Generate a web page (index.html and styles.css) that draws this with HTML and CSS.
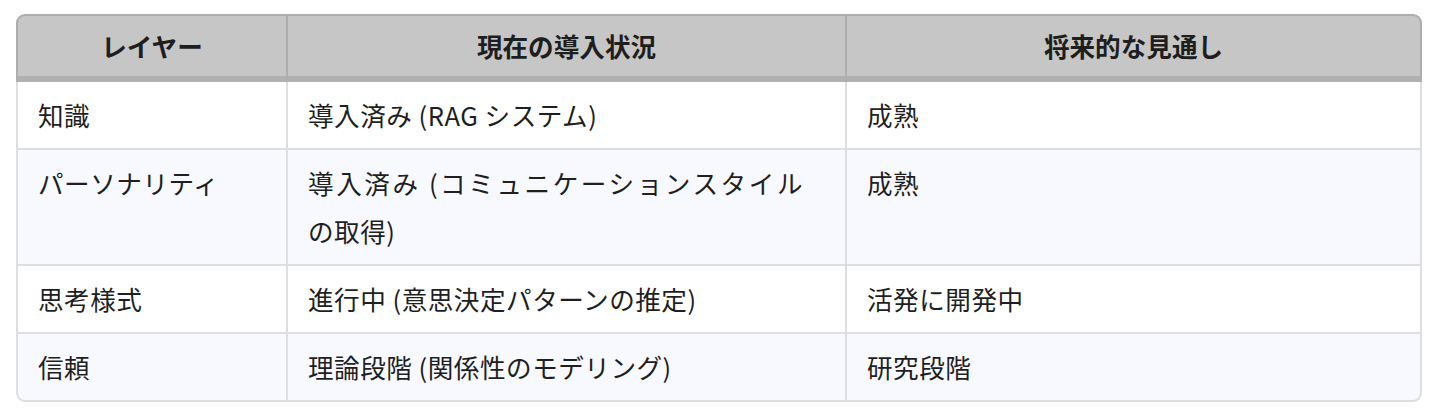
FILE: index.html
```html
<!DOCTYPE html>
<html lang="ja">
<head>
<meta charset="utf-8">
<title>レイヤー</title>
<link rel="stylesheet" href="styles.css">
</head>
<body>
<table class="grid">
  <colgroup>
    <col class="c1">
    <col class="c2">
    <col class="c3">
  </colgroup>
  <thead>
    <tr>
      <th>レイヤー</th>
      <th>現在の導入状況</th>
      <th>将来的な見通し</th>
    </tr>
  </thead>
  <tbody>
    <tr>
      <td>知識</td>
      <td>導入済み (RAG システム)</td>
      <td>成熟</td>
    </tr>
    <tr class="alt">
      <td>パーソナリティ</td>
      <td>導入済み (コミュニケーションスタイル<span class="keep">の取得)</span></td>
      <td>成熟</td>
    </tr>
    <tr>
      <td>思考様式</td>
      <td>進行中 (意思決定パターンの推定)</td>
      <td>活発に開発中</td>
    </tr>
    <tr class="alt">
      <td>信頼</td>
      <td>理論段階 (関係性のモデリング)</td>
      <td>研究段階</td>
    </tr>
  </tbody>
</table>
</body>
</html>
```

FILE: styles.css
```css
html, body {
  margin: 0;
  background: #ffffff;
}

body {
  padding: 14px 16px;
  font-family: "Noto Sans CJK JP", "Noto Sans", sans-serif;
  color: #1f1f1f;
}

.grid {
  width: 1406px;
  table-layout: fixed;
  border-collapse: separate;
  border-spacing: 0;
  font-size: 25.6px;
  line-height: 48px;
}

.c1 { width: 272px; }
.c2 { width: 559px; }
.c3 { width: 575px; }

.grid th {
  background: #c6c6c6;
  font-weight: 700;
  text-align: center;
  padding: 6px 20px;
  border-top: 2px solid #adadad;
  border-right: 2px solid #adadad;
  border-bottom: 6px solid #b0b0b0;
  color: #1e1e1e;
}

.grid th:first-child {
  border-left: 2px solid #adadad;
  border-top-left-radius: 9px;
}

.grid th:last-child {
  border-top-right-radius: 9px;
}

.grid td {
  text-align: justify;
  vertical-align: top;
  padding: 9px 20px;
  letter-spacing: 0.5px;
  border-right: 2px solid #dedee2;
  border-bottom: 2px solid #dedee2;
  background: #ffffff;
}

.grid td:nth-child(2) {
  padding-right: 42px;
}

.keep {
  white-space: nowrap;
}

.grid td:first-child {
  border-left: 2px solid #dedee2;
}

.grid .alt td {
  background: #f8f9fe;
}

.grid tbody tr:last-child td:first-child {
  border-bottom-left-radius: 9px;
}

.grid tbody tr:last-child td:last-child {
  border-bottom-right-radius: 9px;
}
```
